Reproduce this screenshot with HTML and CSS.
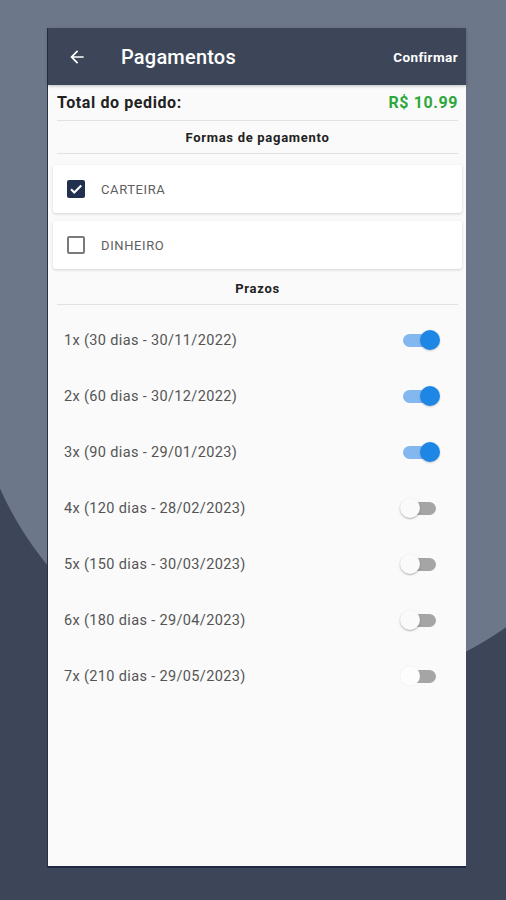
FILE: index.html
```html
<!DOCTYPE html>
<html lang="pt">
<head>
<meta charset="utf-8">
<link rel="stylesheet" href="styles.css">
</head>
<body>
<div class="phone">
  <header class="appbar">
    <svg class="back" width="20" height="20" viewBox="0 0 24 24"><path d="M20 11H7.83l5.59-5.59L12 4l-8 8 8 8 1.41-1.41L7.83 13H20v-2z" fill="#fff"/></svg>
    <h1 class="title">Pagamentos</h1>
    <span class="confirm">Confirmar</span>
  </header>
  <main class="content">
    <div class="total">
      <span class="total-label">Total do pedido:</span>
      <span class="total-value">R$ 10.99</span>
    </div>
    <div class="section">Formas de pagamento</div>
    <div class="cards">
      <div class="card">
        <span class="check on"><svg width="14" height="14" viewBox="0 0 24 24"><path d="M3.5 12.5l5.5 5.5L21 6" fill="none" stroke="#fff" stroke-width="3.6"/></svg></span>
        <span class="card-label">CARTEIRA</span>
      </div>
      <div class="card">
        <span class="check"></span>
        <span class="card-label">DINHEIRO</span>
      </div>
    </div>
    <div class="section section-prazos">Prazos</div>
    <ul class="list">
      <li class="row"><span>1x (30 dias - 30/11/2022)</span><span class="switch on"><i></i></span></li>
      <li class="row"><span>2x (60 dias - 30/12/2022)</span><span class="switch on"><i></i></span></li>
      <li class="row"><span>3x (90 dias - 29/01/2023)</span><span class="switch on"><i></i></span></li>
      <li class="row"><span>4x (120 dias - 28/02/2023)</span><span class="switch"><i></i></span></li>
      <li class="row"><span>5x (150 dias - 30/03/2023)</span><span class="switch"><i></i></span></li>
      <li class="row"><span>6x (180 dias - 29/04/2023)</span><span class="switch"><i></i></span></li>
      <li class="row"><span>7x (210 dias - 29/05/2023)</span><span class="switch faint"><i></i></span></li>
    </ul>
  </main>
</div>
</body>
</html>
```
FILE: styles.css
```css
html, body {
  margin: 0;
  padding: 0;
}
body {
  width: 506px;
  height: 900px;
  overflow: hidden;
  font-family: Roboto, "Noto Sans", Arial, sans-serif;
  background:
    radial-gradient(circle 340px at 310px 350px, #6c7789 339px, rgba(108,119,137,0) 340px),
    linear-gradient(to bottom, #6c7789 450px, #3d4658 450px);
  padding-top: 28px;
  box-sizing: border-box;
}
.phone {
  margin-left: 47px;
  width: 419px;
  height: 840px;
  background: #fafafa;
  display: flex;
  flex-direction: column;
  border-left: 1px solid #26304a;
  border-bottom: 2px solid #1e2744;
  box-sizing: border-box;
}
.appbar {
  height: 57px;
  background: #3d4658;
  display: flex;
  align-items: center;
  padding: 0 8px 0 19px;
  color: #fff;
  flex-shrink: 0;
  box-shadow: 0 1px 3px rgba(0,0,0,0.25);
}
.back {
  flex-shrink: 0;
}
.title {
  margin: 0 0 0 34px;
  font-size: 20px;
  font-weight: 500;
  flex: 1;
  letter-spacing: 0.2px;
}
.confirm {
  font-size: 13.5px;
  font-weight: 700;
  letter-spacing: 0.4px;
}
.content {
  flex: 1;
  display: flex;
  flex-direction: column;
}
.total {
  display: flex;
  justify-content: space-between;
  align-items: center;
  margin: 0 8px 0 9px;
  height: 35px;
  border-bottom: 1px solid #e2e2e2;
  font-size: 16px;
  font-weight: 700;
  letter-spacing: 0.6px;
}
.total-label { color: #222; }
.total-value { color: #2ea83c; }
.section {
  margin: 0 8px 0 9px;
  height: 32px;
  display: flex;
  align-items: center;
  justify-content: center;
  font-size: 13px;
  font-weight: 700;
  color: #222;
  letter-spacing: 0.7px;
  border-bottom: 1px solid #e2e2e2;
}
.section-prazos {
  height: 34px;
  padding-top: 1px;
  box-sizing: border-box;
}
.cards {
  display: flex;
  flex-direction: column;
  gap: 8px;
  margin: 11px 4px 2px 5px;
}
.card {
  height: 48px;
  background: #fff;
  border-radius: 3px;
  box-shadow: 0 1px 3px rgba(0,0,0,0.16);
  display: flex;
  align-items: center;
  padding-left: 14px;
}
.check {
  width: 18px;
  height: 18px;
  box-sizing: border-box;
  border: 2px solid #7a7a7a;
  border-radius: 2px;
  display: flex;
  align-items: center;
  justify-content: center;
}
.check.on {
  background: #22304f;
  border-color: #22304f;
}
.card-label {
  margin-left: 16px;
  font-size: 13px;
  color: #606060;
  letter-spacing: 0.6px;
}
.list {
  list-style: none;
  margin: 7px 0 0;
  padding: 0;
}
.row {
  height: 56px;
  display: flex;
  align-items: center;
  justify-content: space-between;
  padding: 0 30px 0 16px;
  font-size: 14.5px;
  letter-spacing: 0.35px;
  color: #555;
}
.switch {
  position: relative;
  width: 33px;
  height: 13px;
  border-radius: 7px;
  background: #a5a5a5;
  display: block;
}
.switch i {
  position: absolute;
  top: -4px;
  left: -3px;
  width: 20px;
  height: 20px;
  border-radius: 50%;
  background: #fafafa;
  box-shadow: 0 1px 2px rgba(0,0,0,0.3);
}
.switch.on {
  background: #82b8ef;
  width: 30px;
  margin-right: 3px;
}
.switch.on i {
  left: auto;
  right: -7px;
  background: #1e86e4;
  box-shadow: 0 1px 2px rgba(0,0,0,0.2);
}
.switch.faint i {
  box-shadow: 0 0 1px rgba(0,0,0,0.12);
  background: #fdfdfd;
}
```
